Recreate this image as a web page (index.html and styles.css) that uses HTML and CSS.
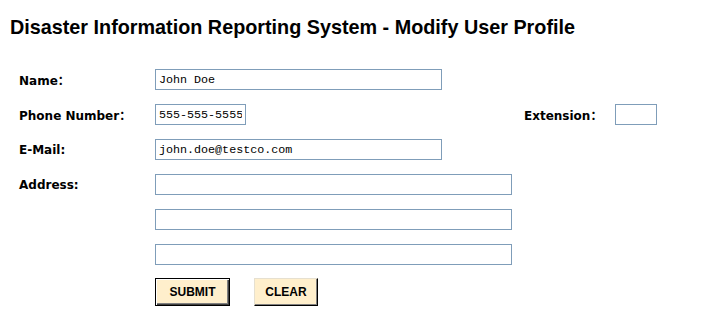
FILE: index.html
```html
<!DOCTYPE html>
<html lang="en">
<head>
    <meta charset="UTF-8">
    <title>Modify User Profile</title>
    <link rel="stylesheet" href="styles.css">
</head>
<body>
    <h1 class="page-title">Disaster Information Reporting System - Modify User Profile</h1>

    <form class="profile-form">
        <div class="form-row">
            <label class="field-label">Name：</label>
            <input class="field-input name-input" type="text" value="John Doe">
        </div>
        <div class="form-row">
            <label class="field-label">Phone Number：</label>
            <input class="field-input phone-input" type="text" value="555-555-5555">
            <label class="ext-label">Extension：</label>
            <input class="field-input ext-input" type="text" value="">
        </div>
        <div class="form-row">
            <label class="field-label">E-Mail:</label>
            <input class="field-input name-input" type="text" value="john.doe@testco.com">
        </div>
        <div class="form-row">
            <label class="field-label">Address:</label>
            <input class="field-input address-input" type="text" value="">
        </div>
        <div class="form-row indent">
            <input class="field-input address-input" type="text" value="">
        </div>
        <div class="form-row indent">
            <input class="field-input address-input" type="text" value="">
        </div>
        <div class="form-row indent button-row">
            <button class="form-btn submit-btn" type="button">SUBMIT</button>
            <button class="form-btn clear-btn" type="button">CLEAR</button>
        </div>
    </form>
</body>
</html>
```

FILE: styles.css
```css
* {
    margin: 0;
    padding: 0;
    box-sizing: border-box;
}

body {
    background: #fff;
    color: #000;
    padding: 16px 9px 0 9px;
    font-family: "DejaVu Sans", Verdana, sans-serif;
}

.page-title {
    font-family: "Liberation Sans", Arial, sans-serif;
    font-size: 19.8px;
    line-height: 22px;
    font-weight: bold;
    padding-left: 1px;
}

.profile-form {
    margin-top: 31px;
    padding-left: 10px;
    display: flex;
    flex-direction: column;
    gap: 14px;
}

.form-row {
    display: flex;
    align-items: center;
    height: 21px;
}

.indent {
    padding-left: 136px;
}

.field-label {
    width: 136px;
    font-size: 12px;
    font-weight: bold;
    font-family: "DejaVu Sans", Verdana, "Noto Sans CJK SC", sans-serif;
}

.ext-label {
    margin-left: 278px;
    width: 91px;
    font-size: 12px;
    font-weight: bold;
    font-family: "DejaVu Sans", Verdana, "Noto Sans CJK SC", sans-serif;
}

.field-input {
    height: 21px;
    border: 1px solid #7f9db9;
    padding: 0 3px;
    font-family: "Liberation Mono", "Courier New", monospace;
    font-size: 11.7px;
    color: #000;
    background: #fff;
    outline: none;
}

.name-input {
    width: 287px;
}

.phone-input {
    width: 91px;
}

.ext-input {
    width: 42px;
}

.address-input {
    width: 357px;
}

.button-row {
    height: 28px;
    margin-top: -1px;
    gap: 24px;
    align-items: flex-start;
}

.form-btn {
    font-family: "Liberation Sans", Arial, sans-serif;
    font-size: 12px;
    font-weight: bold;
    background: #ffefcc;
    color: #000;
    cursor: pointer;
}

.submit-btn {
    width: 75px;
    height: 28px;
    border: 1px solid #000;
    box-shadow: inset 1px 1px 0 #fff, inset -1px -1px 0 #404040, inset -2px -2px 0 #808080;
}

.clear-btn {
    width: 64px;
    height: 28px;
    border-style: solid;
    border-width: 1px;
    border-color: #e6e0d0 #000 #000 #e6e0d0;
    box-shadow: inset -1px -1px 0 #808080;
}
```
